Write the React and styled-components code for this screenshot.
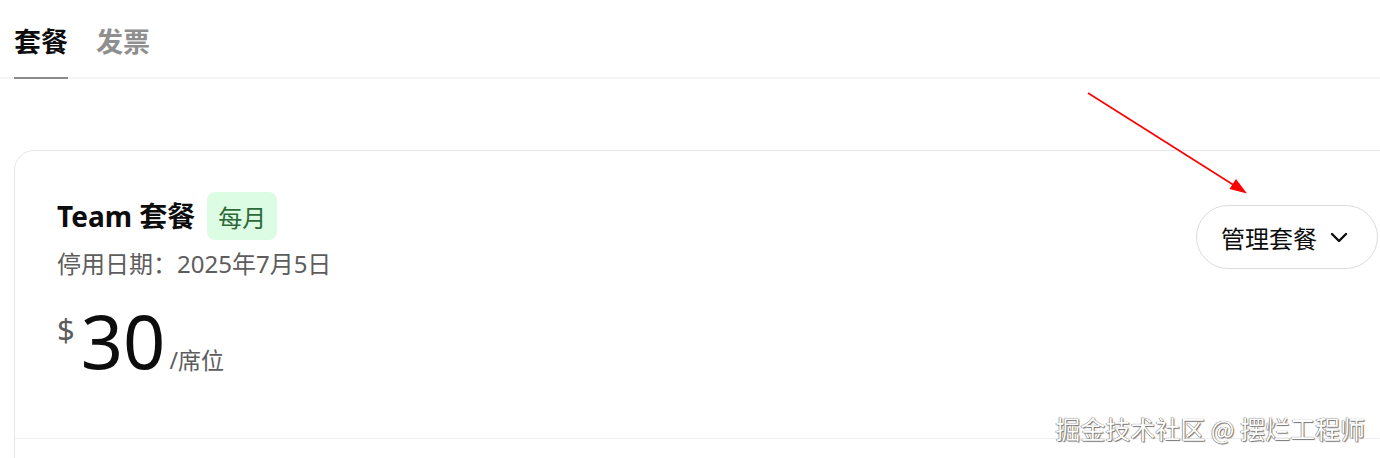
import React from "react";
import styled, { createGlobalStyle } from "styled-components";

const GlobalStyle = createGlobalStyle`
  html, body {
    margin: 0;
    padding: 0;
    background: #ffffff;
    overflow: hidden;
  }
  body {
    font-family: "Noto Sans", "Noto Sans CJK SC", sans-serif;
    color: #0d0d0d;
  }
`;

const Page = styled.div`
  position: relative;
  width: 1380px;
  min-height: 458px;
  overflow: hidden;
`;

const TabBar = styled.nav`
  display: flex;
  gap: 28px;
  padding: 0 14px;
  border-bottom: 2px solid #f4f4f4;
`;

const Tab = styled.button`
  appearance: none;
  background: none;
  border: none;
  margin: 0 0 -2px;
  padding: 21px 0 16px;
  font-family: "Noto Sans CJK SC", sans-serif;
  font-size: 27px;
  line-height: 40px;
  font-weight: 700;
  color: ${(p) => (p.$active ? "#0d0d0d" : "#8f8f8f")};
  border-bottom: 2px solid ${(p) => (p.$active ? "#8a8a8a" : "transparent")};
  cursor: pointer;
`;

const Card = styled.section`
  margin: 71px -41px 0 14px;
  border: 1px solid #e7e7e7;
  border-radius: 20px;
`;

const CardBody = styled.div`
  padding: 41px 42px 60px 42px;
`;

const Header = styled.div`
  display: flex;
  align-items: center;
  justify-content: space-between;
`;

const Info = styled.div`
  display: flex;
  flex-direction: column;
`;

const TitleRow = styled.div`
  display: flex;
  align-items: center;
  gap: 12px;
`;

const Title = styled.h2`
  margin: 0;
  font-size: 28px;
  line-height: 36px;
  font-weight: 700;
  color: #0d0d0d;
`;

const Badge = styled.span`
  display: inline-flex;
  align-items: center;
  height: 48px;
  padding: 0 11px;
  border-radius: 8px;
  background: #dcfce4;
  color: #2e6a38;
  font-family: "Noto Sans CJK SC", sans-serif;
  font-size: 24px;
`;

const DateLine = styled.div`
  margin-top: 6px;
  font-size: 24px;
  line-height: 36px;
  color: #5d5d5d;
`;

const ManageButton = styled.button`
  appearance: none;
  display: inline-flex;
  align-items: center;
  gap: 13px;
  height: 64px;
  padding: 0 29px 0 24px;
  border: 1px solid #dcdcdc;
  border-radius: 32px;
  background: #ffffff;
  font-family: "Noto Sans CJK SC", sans-serif;
  font-size: 24px;
  color: #0d0d0d;
  cursor: pointer;
`;

const PriceRow = styled.div`
  display: flex;
  align-items: baseline;
  margin-top: 22px;
`;

const Currency = styled.span`
  align-self: flex-start;
  margin-top: 10px;
  margin-right: 6px;
  font-size: 31px;
  line-height: 1;
  color: #5d5d5d;
`;

const Amount = styled.span`
  font-size: 74px;
  line-height: 1;
  color: #0d0d0d;
`;

const Unit = styled.span`
  margin-left: 4px;
  font-size: 23px;
  color: #5d5d5d;
`;

const CardFooter = styled.div`
  border-top: 1px solid #f0f0f0;
  height: 80px;
`;

const Annotation = styled.svg`
  position: absolute;
  left: 0;
  top: 0;
  pointer-events: none;
`;

const Watermark = styled.div`
  position: absolute;
  right: 15px;
  top: 408px;
  font-family: "Noto Sans CJK SC", sans-serif;
  font-size: 25px;
  line-height: 40px;
  color: #ffffff;
  text-shadow: 0 0 1px #555, 1px 1px 1px #777, -0.5px -0.5px 0 #999;
  white-space: nowrap;
`;

function Chevron() {
  return (
    <svg width="18" height="11" viewBox="0 0 18 11" fill="none">
      <path d="M2 2 L9 9 L16 2" stroke="#0d0d0d" strokeWidth="2.4" strokeLinecap="round" strokeLinejoin="round" />
    </svg>
  );
}

export default function App() {
  return (
    <Page>
      <GlobalStyle />
      <TabBar>
        <Tab $active>套餐</Tab>
        <Tab>发票</Tab>
      </TabBar>
      <Card>
        <CardBody>
          <Header>
            <Info>
              <TitleRow>
                <Title>Team 套餐</Title>
                <Badge>每月</Badge>
              </TitleRow>
              <DateLine>停用日期：2025年7月5日</DateLine>
            </Info>
            <ManageButton>
              管理套餐
              <Chevron />
            </ManageButton>
          </Header>
          <PriceRow>
            <Currency>$</Currency>
            <Amount>30</Amount>
            <Unit>/席位</Unit>
          </PriceRow>
        </CardBody>
        <CardFooter />
      </Card>
      <Annotation width="1380" height="458" viewBox="0 0 1380 458">
        <line x1="1088" y1="93" x2="1236" y2="186.5" stroke="#f00" strokeWidth="1.6" />
        <polygon points="1247,193.5 1229.5,189 1236,179" fill="#f00" />
      </Annotation>
      <Watermark>掘金技术社区 @ 摆烂工程师</Watermark>
    </Page>
  );
}
